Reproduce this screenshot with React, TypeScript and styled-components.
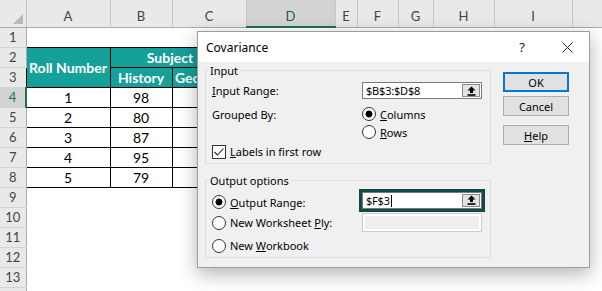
import styled, { createGlobalStyle, css } from 'styled-components';

const GlobalStyle = createGlobalStyle`
  html, body {
    margin: 0;
    padding: 0;
    background: #ffffff;
    overflow: hidden;
  }
`;

const Screen = styled.div`
  position: relative;
  width: 602px;
  height: 291px;
  overflow: hidden;
  background: #ffffff;
`;

const Sheet = styled.table`
  border-collapse: collapse;
  table-layout: fixed;
  width: 632px;
  font-family: Lato, 'Liberation Sans', sans-serif;
`;

const HeaderRow = styled.tr`
  height: 27px;
`;

const GridRow = styled.tr`
  height: 20px;
`;

const Corner = styled.th`
  padding: 0;
  background: #e9e9e9;
  border-right: 1px solid #c6c6c6;
  border-bottom: 1px solid #ababab;
  text-align: right;
  vertical-align: bottom;
  line-height: 0;

  svg {
    margin: 0 3px 3px 0;
  }
`;

const ColHead = styled.th<{ $active?: boolean }>`
  padding: 6px 0 0;
  background: #e9e9e9;
  border-right: 1px solid #c6c6c6;
  border-bottom: 1px solid #ababab;
  color: #444444;
  font-size: 13px;
  font-weight: 400;
  text-align: center;

  ${(p) =>
    p.$active &&
    css`
      background: #d3d3d3;
      color: #1e5e3c;
      border-bottom: 2px solid #217346;
    `}
`;

const RowHead = styled.th<{ $active?: boolean }>`
  padding: 0;
  background: #e9e9e9;
  border-right: 1px solid #ababab;
  border-bottom: 1px solid #d4d4d4;
  color: #444444;
  font-size: 13px;
  font-weight: 400;
  text-align: center;

  ${(p) =>
    p.$active &&
    css`
      background: #d3d3d3;
      color: #217346;
      border-right: 2px solid #217346;
    `}
`;

const Cell = styled.td<{ $boxed?: boolean; $head?: boolean; $padRight?: number }>`
  padding: 0 ${(p) => p.$padRight ?? 0}px 0 0;
  font-size: 14px;
  color: #000000;
  text-align: center;
  white-space: nowrap;
  overflow: hidden;

  ${(p) =>
    p.$boxed &&
    css`
      border: 1px solid #000000;
    `}

  ${(p) =>
    p.$head &&
    css`
      border: 1px solid #000000;
      background: #16a09a;
      color: #ffffff;
      font-weight: 700;
    `}
`;

/* ---------- dialog ---------- */

const Dialog = styled.div`
  position: absolute;
  left: 197px;
  top: 31px;
  width: 393px;
  height: 237px;
  box-sizing: border-box;
  border: 1px solid #9c9c9c;
  background: #f0f0f0;
  box-shadow: 0 6px 18px rgba(0, 0, 0, 0.3);
  font-family: 'Noto Sans', 'Open Sans', sans-serif;
  font-size: 11px;
  color: #000000;
  display: flex;
  flex-direction: column;
`;

const TitleBar = styled.div`
  height: 30px;
  background: #ffffff;
  display: flex;
  align-items: center;
  padding-left: 8px;
  font-size: 12px;
`;

const Title = styled.span`
  flex: 1;
`;

const TitleButton = styled.span<{ $w: number }>`
  width: ${(p) => p.$w}px;
  height: 30px;
  display: flex;
  align-items: center;
  justify-content: center;
  font-size: 13px;
  color: #222222;
`;

const Body = styled.div`
  flex: 1;
  display: flex;
  gap: 12px;
  padding: 0 20px 0 7px;
`;

const Groups = styled.div`
  width: 286px;
  display: flex;
  flex-direction: column;
  gap: 8px;
`;

const Group = styled.fieldset`
  margin: 0;
  min-width: 0;
  padding: 0 8px 2px 6px;
  border: 1px solid #dcdcdc;
  display: flex;
  flex-direction: column;
`;

const Legend = styled.legend`
  margin-left: -4px;
  padding: 2px 2px 0;
  line-height: 14px;
`;

const FormRow = styled.div<{ $h: number; $mt?: number }>`
  height: ${(p) => p.$h}px;
  margin-top: ${(p) => p.$mt ?? 0}px;
  display: flex;
  align-items: center;
`;

const Label = styled.span<{ $w?: number; $drop?: number }>`
  width: ${(p) => (p.$w ? `${p.$w}px` : 'auto')};
  margin-top: ${(p) => p.$drop ?? 0}px;
  flex: none;
  white-space: nowrap;
`;

const Key = styled.span`
  text-decoration: underline;
  text-underline-offset: 1px;
`;

const Choice = styled.span`
  display: flex;
  align-items: center;
  gap: 4px;
  white-space: nowrap;
`;

const RadioDot = styled.span<{ $checked?: boolean }>`
  width: 14px;
  height: 14px;
  box-sizing: border-box;
  border: 1px solid #333333;
  border-radius: 50%;
  background: ${(p) =>
    p.$checked ? 'radial-gradient(circle, #000 0 3.2px, #fff 3.8px)' : '#ffffff'};
`;

const CheckBox = styled.span`
  width: 14px;
  height: 14px;
  box-sizing: border-box;
  border: 1px solid #333333;
  background: #ffffff;
  display: flex;
  align-items: center;
  justify-content: center;
`;

const RangeField = styled.div<{ $focused?: boolean; $disabled?: boolean; $h?: number }>`
  width: 120px;
  height: ${(p) => p.$h ?? 17}px;
  box-sizing: border-box;
  border: 1px solid #7a7a7a;
  background: #ffffff;
  display: flex;
  align-items: stretch;

  ${(p) =>
    p.$focused &&
    css`
      outline: 3px solid #114a48;
    `}

  ${(p) =>
    p.$disabled &&
    css`
      border-color: #cccccc;
      background: #eeeeee;
      box-shadow: inset 0 0 0 2px #ffffff;
    `}
`;

const RangeText = styled.span`
  flex: 1;
  padding-left: 3px;
  line-height: 15px;
  font-size: 11px;
  letter-spacing: -0.2px;
`;

const Caret = styled.span`
  display: inline-block;
  width: 1px;
  height: 12px;
  margin-left: 1px;
  vertical-align: -2px;
  background: #000000;
`;

const PickButton = styled.span`
  width: 18px;
  margin: 1px;
  box-sizing: border-box;
  border: 1px solid #8a8a8a;
  background: #e3e3e3;
  display: flex;
  align-items: center;
  justify-content: center;
`;

const Buttons = styled.div`
  width: 66px;
  padding-top: 10px;
  display: flex;
  flex-direction: column;
`;

const Button = styled.div<{ $primary?: boolean; $mt?: number }>`
  height: 20px;
  margin-top: ${(p) => p.$mt ?? 0}px;
  box-sizing: border-box;
  border: ${(p) => (p.$primary ? '2px solid #0078d7' : '1px solid #adadad')};
  background: #e1e1e1;
  display: flex;
  align-items: center;
  justify-content: center;
`;

const UpArrow = () => (
  <svg width="9" height="10" viewBox="0 0 9 10">
    <path d="M4.5 0.5 L8.5 4.5 H6 V7 H3 V4.5 H0.5 Z" fill="#000" />
    <rect x="0.5" y="8.2" width="8" height="1.6" fill="#000" />
  </svg>
);

const Range = ({ value, focused, caret }: { value: string; focused?: boolean; caret?: boolean }) => (
  <RangeField $focused={focused}>
    <RangeText>
      {value}
      {caret && <Caret />}
    </RangeText>
    <PickButton>
      <UpArrow />
    </PickButton>
  </RangeField>
);

const Radio = ({ checked, children }: { checked?: boolean; children: React.ReactNode }) => (
  <Choice>
    <RadioDot $checked={checked} />
    <span>{children}</span>
  </Choice>
);

const COLUMNS = [
  { key: 'A', width: 84 },
  { key: 'B', width: 62 },
  { key: 'C', width: 74 },
  { key: 'D', width: 89 },
  { key: 'E', width: 22 },
  { key: 'F', width: 41 },
  { key: 'G', width: 35 },
  { key: 'H', width: 61 },
  { key: 'I', width: 78 },
  { key: 'J', width: 60 },
];

const DATA = [
  { roll: 1, history: 98 },
  { roll: 2, history: 80 },
  { roll: 3, history: 87 },
  { roll: 4, history: 95 },
  { roll: 5, history: 79 },
];

const blanks = (n: number, prefix: string) =>
  Array.from({ length: n }, (_, i) => <Cell key={`${prefix}-${i}`} />);

export default function App() {
  return (
    <>
      <GlobalStyle />
      <Screen>
        <Sheet>
          <colgroup>
            <col style={{ width: 26 }} />
            {COLUMNS.map((c) => (
              <col key={c.key} style={{ width: c.width }} />
            ))}
          </colgroup>
          <thead>
            <HeaderRow>
              <Corner>
                <svg width="10" height="10" viewBox="0 0 10 10">
                  <path d="M10 0 V10 H0 Z" fill="#b8b8b8" />
                </svg>
              </Corner>
              {COLUMNS.map((c) => (
                <ColHead key={c.key} $active={c.key === 'D'}>
                  {c.key === 'J' ? '' : c.key}
                </ColHead>
              ))}
            </HeaderRow>
          </thead>
          <tbody>
            <GridRow>
              <RowHead>1</RowHead>
              {blanks(10, 'r1')}
            </GridRow>
            <GridRow>
              <RowHead>2</RowHead>
              <Cell $head rowSpan={2}>
                Roll Number
              </Cell>
              <Cell $head colSpan={2} $padRight={16}>
                Subject
              </Cell>
              {blanks(7, 'r2')}
            </GridRow>
            <GridRow>
              <RowHead>3</RowHead>
              <Cell $head>History</Cell>
              <Cell $head>Geography</Cell>
              {blanks(7, 'r3')}
            </GridRow>
            {DATA.map((d, i) => (
              <GridRow key={d.roll}>
                <RowHead $active={i === 0}>{i + 4}</RowHead>
                <Cell $boxed>{d.roll}</Cell>
                <Cell $boxed>{d.history}</Cell>
                <Cell $boxed />
                {blanks(7, `d${i}`)}
              </GridRow>
            ))}
            {[9, 10, 11, 12, 13].map((n) => (
              <GridRow key={n}>
                <RowHead>{n}</RowHead>
                {blanks(10, `e${n}`)}
              </GridRow>
            ))}
            <GridRow>
              <RowHead />
              {blanks(10, 'e14')}
            </GridRow>
          </tbody>
        </Sheet>

        <Dialog>
          <TitleBar>
            <Title>Covariance</Title>
            <TitleButton $w={46}>?</TitleButton>
            <TitleButton $w={44}>
              <svg width="11" height="11" viewBox="0 0 11 11">
                <path d="M0.5 0.5 L10.5 10.5 M10.5 0.5 L0.5 10.5" stroke="#222" strokeWidth="1" />
              </svg>
            </TitleButton>
          </TitleBar>
          <Body>
            <Groups>
              <Group>
                <Legend>Input</Legend>
                <FormRow $h={17} $mt={4}>
                  <Label $w={150}>
                    <Key>I</Key>nput Range:
                  </Label>
                  <Range value="$B$3:$D$8" />
                </FormRow>
                <FormRow $h={18} $mt={6}>
                  <Label $w={150}>Grouped By:</Label>
                  <Radio checked>
                    <Key>C</Key>olumns
                  </Radio>
                </FormRow>
                <FormRow $h={18}>
                  <Label $w={150} />
                  <Radio>
                    <Key>R</Key>ows
                  </Radio>
                </FormRow>
                <FormRow $h={19} $mt={1}>
                  <Choice>
                    <CheckBox>
                      <svg width="12" height="12" viewBox="0 0 12 12">
                        <path d="M1.5 6 L4.5 9 L10.5 2.5" fill="none" stroke="#222" strokeWidth="1.1" />
                      </svg>
                    </CheckBox>
                    <span>
                      <Key>L</Key>abels in first row
                    </span>
                  </Choice>
                </FormRow>
              </Group>

              <Group>
                <Legend>Output options</Legend>
                <FormRow $h={24}>
                  <Label $w={150} $drop={4}>
                    <Radio checked>
                      <Key>O</Key>utput Range:
                    </Radio>
                  </Label>
                  <Range value="$F$3" focused caret />
                </FormRow>
                <FormRow $h={20}>
                  <Label $w={150} $drop={1}>
                    <Radio>
                      New Worksheet <Key>P</Key>ly:
                    </Radio>
                  </Label>
                  <RangeField $disabled $h={19} />
                </FormRow>
                <FormRow $h={19} $mt={4}>
                  <Radio>
                    New <Key>W</Key>orkbook
                  </Radio>
                </FormRow>
              </Group>
            </Groups>

            <Buttons>
              <Button $primary>OK</Button>
              <Button $mt={4}>Cancel</Button>
              <Button $mt={9}>
                <span>
                  <Key>H</Key>elp
                </span>
              </Button>
            </Buttons>
          </Body>
        </Dialog>
      </Screen>
    </>
  );
}
